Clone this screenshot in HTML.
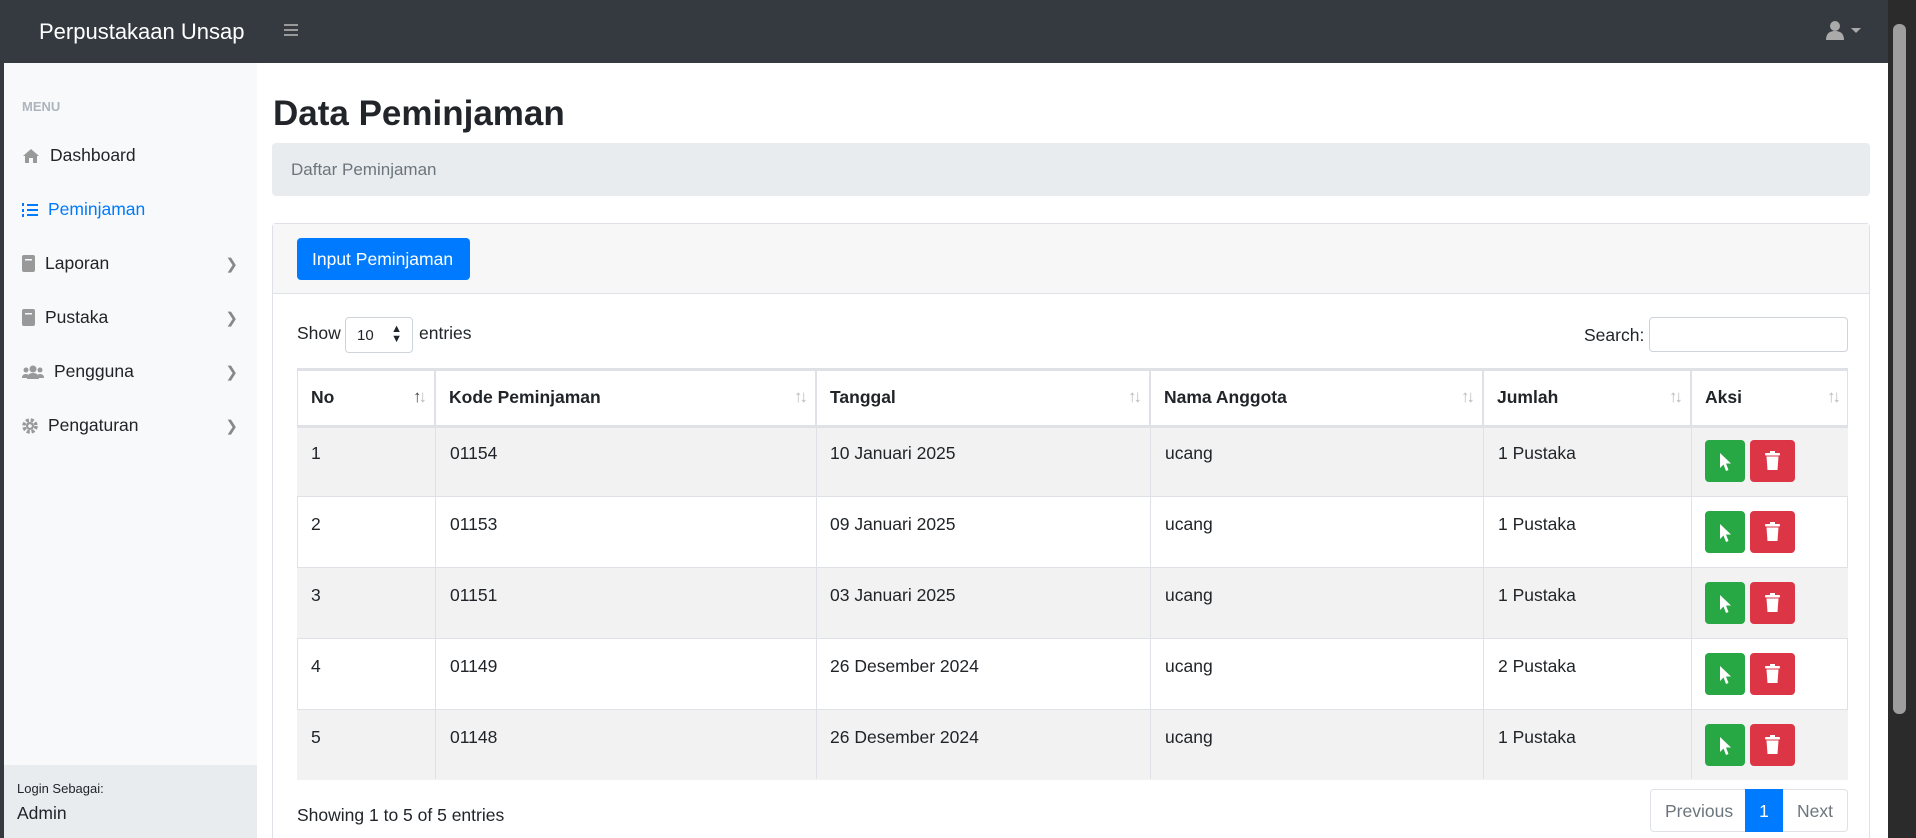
<!DOCTYPE html>
<html style="overflow:hidden;height:838px"><head><meta charset="utf-8"><style>
*{box-sizing:border-box;margin:0;padding:0}
body{width:1916px;height:838px;overflow:hidden;background:#343a40;font-family:"Liberation Sans",sans-serif;color:#212529;position:relative;font-size:17.5px}
.abs{position:absolute}
.nav{left:0;top:0;width:1888px;height:63px;background:#343a40}
.side{left:4px;top:63px;width:253px;height:775px;background:#f8f9fa}
.main{left:257px;top:63px;width:1631px;height:775px;background:#fff}
.sfoot{left:4px;top:765px;width:253px;height:73px;background:#e9ecef}
.item{position:absolute;left:18px;font-size:17.5px;color:#212529;display:flex;align-items:center;width:216px}
.item svg{margin-right:10px}
.chev{position:absolute;right:0;color:#888;font-size:15px}
.th{position:absolute;top:369px;height:56px;font-weight:bold;display:flex;align-items:center;padding-left:14px;border-right:1px solid #dee2e6}
.row{position:absolute;left:297px;width:1551px;height:71px;border-top:1px solid #dee2e6}
.cell{position:absolute;top:15px}
.sort{position:absolute;right:10px;color:#bbb;font-size:17px;letter-spacing:-3px}
.bg{position:absolute;width:40px;height:42px;border-radius:4px;background:#28a745;top:12px;left:1408px}
.br{position:absolute;width:45px;height:42px;border-radius:4px;background:#dc3545;top:12px;left:1453px}
</style></head><body>
<div class="abs nav"></div>
<div class="abs" style="left:39px;top:19px;color:#fff;font-size:22px">Perpustakaan Unsap</div>
<div class="abs" style="left:284px;top:24px;width:14px;height:12px;border-top:2px solid #999;border-bottom:2px solid #999"><div style="margin-top:3px;border-top:2px solid #999"></div></div>
<svg class="abs" style="left:1825px;top:20px" width="20" height="20" viewBox="0 0 20 20"><circle cx="10" cy="6" r="5" fill="#aaa"/><path d="M1 20 Q1 11 10 11 Q19 11 19 20Z" fill="#aaa"/></svg>
<div class="abs" style="left:1851px;top:28px;border:5px solid transparent;border-top-color:#aaa"></div>
<div class="abs" style="left:1888px;top:0;width:28px;height:838px;background:#2b2b2b"></div>
<div class="abs" style="left:1893px;top:24px;width:13px;height:690px;background:#9e9e9e;border-radius:6px"></div>
<div class="abs side"></div>
<div class="abs main"></div>
<div class="abs sfoot"></div>
<div class="abs" style="left:22px;top:99px;font-size:13px;font-weight:bold;color:#adb5bd">MENU</div>
<div class="item" style="top:145px;left:22px"><svg width="18" height="16" viewBox="0 0 18 16"><path d="M9 1L1 8h2v7h4v-5h4v5h4V8h2z" fill="#999"/></svg>Dashboard</div>
<div class="item" style="top:199px;left:22px;color:#007bff"><svg width="16" height="16" viewBox="0 0 16 16" fill="#007bff"><rect x="0" y="1" width="2" height="3"/><rect x="0" y="7" width="2" height="3"/><rect x="0" y="12" width="2" height="3"/><rect x="5" y="2" width="11" height="2"/><rect x="5" y="7" width="11" height="2"/><rect x="5" y="12" width="11" height="2"/></svg>Peminjaman</div>
<div class="item" style="top:253px;left:22px"><svg width="13" height="17" viewBox="0 0 13 17"><rect width="13" height="17" rx="2" fill="#999"/><rect x="3" y="4" width="7" height="1.5" fill="#f8f9fa"/></svg>Laporan<span class="chev">❯</span></div>
<div class="item" style="top:307px;left:22px"><svg width="13" height="17" viewBox="0 0 13 17"><rect width="13" height="17" rx="2" fill="#999"/><rect x="3" y="4" width="7" height="1.5" fill="#f8f9fa"/></svg>Pustaka<span class="chev">❯</span></div>
<div class="item" style="top:361px;left:22px"><svg width="22" height="14" viewBox="0 0 22 14" fill="#999"><circle cx="11" cy="4" r="3.5"/><circle cx="4" cy="5" r="2.5"/><circle cx="18" cy="5" r="2.5"/><path d="M5 14Q5 8 11 8Q17 8 17 14z"/><path d="M0 13Q0 9 4 9Q6 9 6 10L5 13z"/><path d="M22 13Q22 9 18 9Q16 9 16 10L17 13z"/></svg>Pengguna<span class="chev">❯</span></div>
<div class="item" style="top:415px;left:22px"><svg width="16" height="16" viewBox="0 0 16 16"><circle cx="8" cy="8" r="6" fill="none" stroke="#999" stroke-width="3.5" stroke-dasharray="3 1.8"/><circle cx="8" cy="8" r="4" fill="#999"/><circle cx="8" cy="8" r="1.8" fill="#f8f9fa"/></svg>Pengaturan<span class="chev">❯</span></div>
<div class="abs" style="left:17px;top:781px;font-size:13px">Login Sebagai:</div>
<div class="abs" style="left:17px;top:803px;font-size:17.5px">Admin</div>

<div class="abs" style="left:273px;top:94px;font-size:35px;font-weight:bold">Data Peminjaman</div>
<div class="abs" style="left:272px;top:143px;width:1598px;height:53px;background:#e9ecef;border-radius:4px;color:#6c757d;padding:17px 0 0 19px;font-size:17px">Daftar Peminjaman</div>
<div class="abs" style="left:272px;top:223px;width:1598px;height:620px;border:1px solid #dee2e6;border-radius:4px"></div>
<div class="abs" style="left:273px;top:224px;width:1596px;height:70px;background:#f7f7f7;border-bottom:1px solid #dee2e6"></div>
<div class="abs" style="left:297px;top:238px;width:173px;height:42px;background:#007bff;border-radius:4px;color:#fff;font-size:17.5px;padding:11px 0 0 15px">Input Peminjaman</div>
<div class="abs" style="left:297px;top:323px">Show</div>
<div class="abs" style="left:345px;top:317px;width:68px;height:36px;border:1px solid #ced4da;border-radius:4px;font-size:15px;padding:9px 0 0 11px">10<span style="position:absolute;right:10px;top:6px;font-size:11px;line-height:10px">▲<br>▼</span></div>
<div class="abs" style="left:419px;top:323px">entries</div>
<div class="abs" style="left:1584px;top:325px">Search:</div>
<div class="abs" style="left:1649px;top:317px;width:199px;height:35px;border:1px solid #ced4da;border-radius:4px"></div>

<div class="abs" style="left:297px;top:368px;width:1551px;height:412px;border:1px solid #dee2e6;border-top:3px solid #dee2e6"></div>
<div class="row" style="top:425px;background:#f2f2f2;border-top:3px solid #dee2e6"></div>
<div class="row" style="top:496px"></div>
<div class="row" style="top:567px;background:#f2f2f2"></div>
<div class="row" style="top:638px"></div>
<div class="row" style="top:709px;background:#f2f2f2"></div>
<div class="abs" style="left:435px;top:369px;height:410px;border-left:1px solid #dee2e6"></div>
<div class="abs" style="left:816px;top:369px;height:410px;border-left:1px solid #dee2e6"></div>
<div class="abs" style="left:1150px;top:369px;height:410px;border-left:1px solid #dee2e6"></div>
<div class="abs" style="left:1483px;top:369px;height:410px;border-left:1px solid #dee2e6"></div>
<div class="abs" style="left:1691px;top:369px;height:410px;border-left:1px solid #dee2e6"></div>

<div class="th" style="left:297px;width:138px">No<span class="sort" style="color:#444">↑<span style="color:#bbb">↓</span></span></div>
<div class="th" style="left:435px;width:381px">Kode Peminjaman<span class="sort">↑↓</span></div>
<div class="th" style="left:816px;width:334px">Tanggal<span class="sort">↑↓</span></div>
<div class="th" style="left:1150px;width:333px">Nama Anggota<span class="sort">↑↓</span></div>
<div class="th" style="left:1483px;width:208px">Jumlah<span class="sort">↑↓</span></div>
<div class="th" style="left:1691px;width:157px;border:0">Aksi<span class="sort">↑↓</span></div>

<div id="rows"></div>
<script>
var d=[["1","01154","10 Januari 2025","1 Pustaka"],["2","01153","09 Januari 2025","1 Pustaka"],["3","01151","03 Januari 2025","1 Pustaka"],["4","01149","26 Desember 2024","2 Pustaka"],["5","01148","26 Desember 2024","1 Pustaka"]];
var h="";
d.forEach(function(r,i){var t=428+i*71;
h+='<div class="abs" style="left:297px;top:'+t+'px;width:1551px;height:68px">'+
'<div class="cell" style="left:14px">'+r[0]+'</div><div class="cell" style="left:153px">'+r[1]+'</div><div class="cell" style="left:533px">'+r[2]+'</div><div class="cell" style="left:868px">ucang</div><div class="cell" style="left:1201px">'+r[3]+'</div>'+
'<div class="bg"><svg style="position:absolute;left:14px;top:12px" width="14" height="20" viewBox="0 0 14 20"><path d="M1 1V16L4.5 12.5L7 19L9.5 18L7 11.5H12Z" fill="#fff"/></svg></div>'+
'<div class="br"><svg style="position:absolute;left:15px;top:11px" width="15" height="19" viewBox="0 0 15 19" fill="#fff"><rect x="0" y="2" width="15" height="2.5" rx="1"/><rect x="5" y="0" width="5" height="3"/><path d="M1.5 5.5H13.5L12.5 19H2.5Z"/></svg></div></div>';});
document.getElementById("rows").innerHTML=h;
</script>
<div class="abs" style="left:297px;top:805px">Showing 1 to 5 of 5 entries</div>
<div class="abs" style="left:1650px;top:789px;width:198px;height:43px;border:1px solid #dee2e6;border-radius:4px"></div>
<div class="abs" style="left:1665px;top:801px;color:#6c757d">Previous</div>
<div class="abs" style="left:1745px;top:789px;width:38px;height:43px;background:#007bff;color:#fff;text-align:center;padding-top:12px">1</div>
<div class="abs" style="left:1797px;top:801px;color:#6c757d">Next</div>
</body></html>
